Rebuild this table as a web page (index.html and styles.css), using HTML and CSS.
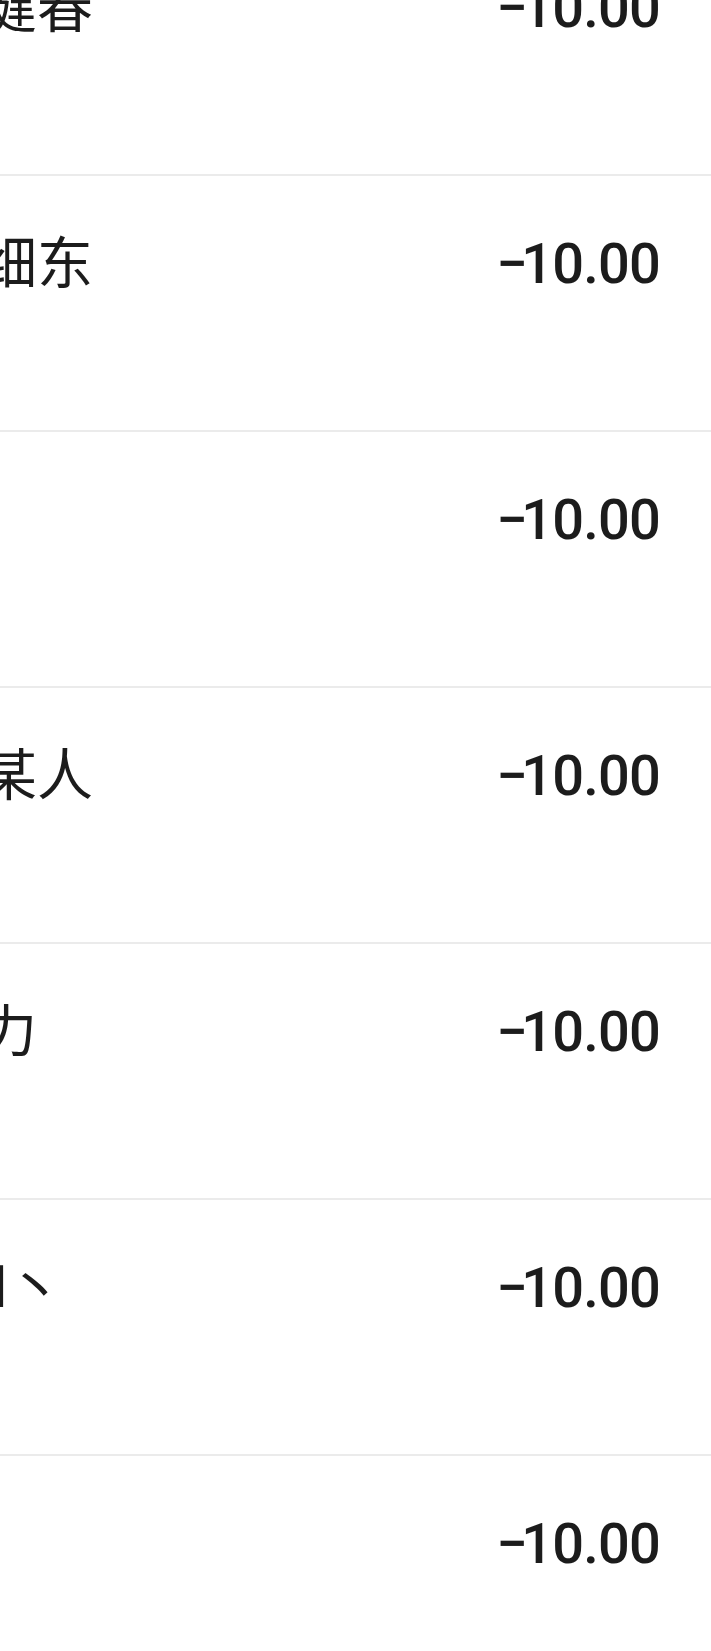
FILE: index.html
```html
<!DOCTYPE html>
<html lang="zh-CN">
<head>
  <meta charset="UTF-8">
  <title>明细</title>
  <link rel="stylesheet" href="styles.css">
</head>
<body>

<div class="list">
  <div class="row">
    <span class="name">王健春</span>
    <span class="amount"><span class="sign">−</span>10.00</span>
  </div>
  <div class="row">
    <span class="name">陈细东</span>
    <span class="amount"><span class="sign">−</span>10.00</span>
  </div>
  <div class="row">
    <span class="name">鑫</span>
    <span class="amount"><span class="sign">−</span>10.00</span>
  </div>
  <div class="row">
    <span class="name">张某人</span>
    <span class="amount"><span class="sign">−</span>10.00</span>
  </div>
  <div class="row">
    <span class="name">王力</span>
    <span class="amount"><span class="sign">−</span>10.00</span>
  </div>
  <div class="row">
    <span class="name">Dol丶</span>
    <span class="amount"><span class="sign">−</span>10.00</span>
  </div>
  <div class="row">
    <span class="name">鑫</span>
    <span class="amount"><span class="sign">−</span>10.00</span>
  </div>
</div>

</body>
</html>
```

FILE: styles.css
```css
html, body {
    margin: 0;
    padding: 0;
    background: #ffffff;
    overflow: hidden;
}
.list {
    margin-top: -80px;
}
.row {
    display: flex;
    align-items: baseline;
    justify-content: space-between;
    box-sizing: border-box;
    height: 256px;
    padding: 60px 51px 0 0;
    border-bottom: 2px solid #ebebeb;
    overflow: hidden;
}
.name {
    margin-left: -75px;
    font-family: Roboto, "Noto Sans CJK SC", sans-serif;
    font-size: 56px;
    line-height: 1;
    color: #1c1c1c;
    white-space: nowrap;
}
.amount {
    font-family: Roboto, sans-serif;
    font-size: 56px;
    font-weight: 500;
    letter-spacing: -0.8px;
    line-height: 1;
    color: #1c1c1c;
}
.sign {
    letter-spacing: -6.8px;
}
```
